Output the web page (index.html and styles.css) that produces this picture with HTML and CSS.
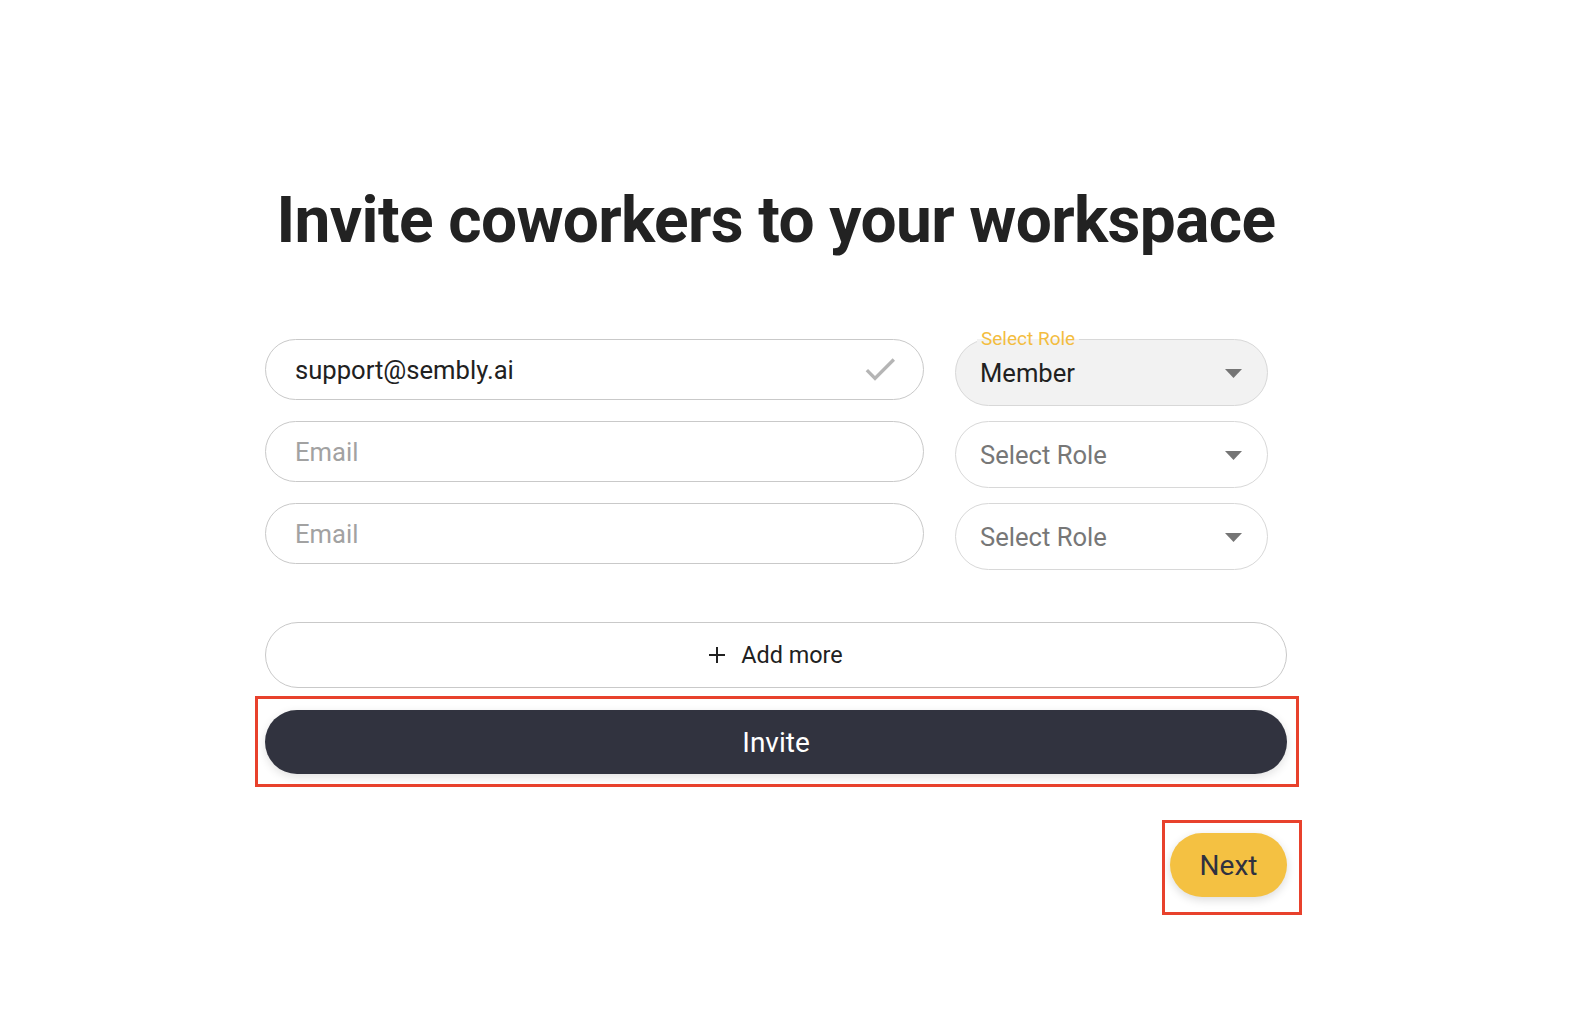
FILE: index.html
```html
<!DOCTYPE html>
<html lang="en">
<head>
<meta charset="utf-8">
<title>Invite coworkers</title>
<link rel="stylesheet" href="styles.css">
</head>
<body>
<main class="page">
  <h1 class="title">Invite coworkers to your workspace</h1>
  <section class="form">
    <div class="rows">
      <div class="row">
        <div class="field">
          <span class="value">support@sembly.ai</span>
          <svg class="check" width="40" height="40" viewBox="0 0 24 24"><path d="M9 16.17L4.83 12l-1.42 1.41L9 19 21 7l-1.41-1.41z"/></svg>
        </div>
        <div class="select filled">
          <span class="label">Select Role</span>
          <span class="value">Member</span>
          <svg class="arrow" width="17" height="9" viewBox="0 0 17 9"><path d="M0 0h17L8.5 9z"/></svg>
        </div>
      </div>
      <div class="row">
        <div class="field"><span class="placeholder">Email</span></div>
        <div class="select">
          <span class="value muted">Select Role</span>
          <svg class="arrow" width="17" height="9" viewBox="0 0 17 9"><path d="M0 0h17L8.5 9z"/></svg>
        </div>
      </div>
      <div class="row">
        <div class="field"><span class="placeholder">Email</span></div>
        <div class="select">
          <span class="value muted">Select Role</span>
          <svg class="arrow" width="17" height="9" viewBox="0 0 17 9"><path d="M0 0h17L8.5 9z"/></svg>
        </div>
      </div>
    </div>
    <button class="add-more" type="button">
      <svg class="plus" width="16" height="16" viewBox="0 0 16 16"><path d="M7 0h2v7h7v2H9v7H7V9H0V7h7z"/></svg>
      <span>Add more</span>
    </button>
    <button class="invite" type="button">Invite</button>
    <button class="next" type="button">Next</button>
  </section>
</main>
</body>
</html>
```
FILE: styles.css
```css
* { box-sizing: border-box; }

html, body { min-height: 100%; }

body {
  margin: 0;
  background: #ffffff;
  font-family: Roboto, "Liberation Sans", sans-serif;
  color: #212121;
}

.page {
  display: flex;
  flex-direction: column;
  align-items: center;
  min-height: 1030px;
  padding: 182px 44px 60px 0;
}

.title {
  margin: 0;
  font-size: 64px;
  font-weight: 700;
  line-height: 77px;
  color: #222222;
  letter-spacing: -0.62px;
}

.form {
  width: 1022px;
  margin-top: 80px;
  display: flex;
  flex-direction: column;
}

.rows {
  display: flex;
  flex-direction: column;
  gap: 15px;
}

.row {
  display: flex;
  align-items: flex-start;
  gap: 31px;
}

.field {
  width: 659px;
  height: 61px;
  border: 1px solid #c9c9c9;
  border-radius: 31px;
  display: flex;
  align-items: center;
  justify-content: space-between;
  padding: 0 23px 0 29px;
  font-size: 25.6px;
}

.field .value { color: #212121; }
.placeholder { color: #a2a2a2; }

.check { fill: #b5b5b5; margin-bottom: 2px; }

.select {
  position: relative;
  width: 313px;
  height: 67px;
  border: 1px solid #d8d8d8;
  border-radius: 34px;
  display: flex;
  align-items: center;
  justify-content: space-between;
  padding: 0 25px 0 24px;
  font-size: 25.6px;
}

.select.filled { background: #f2f2f2; }

.select .value { color: #212121; }
.select .value.muted { color: #777777; }

.arrow { fill: #757575; margin-top: 2px; }

.label {
  position: absolute;
  left: 21px;
  top: -13px;
  padding: 0 4px;
  font-size: 19px;
  line-height: 23px;
  color: #f3bd3f;
  background: linear-gradient(#ffffff 0 12px, #f2f2f2 12px 100%);
}

.add-more {
  margin-top: 52px;
  height: 66px;
  border: 1px solid #c9c9c9;
  border-radius: 33px;
  background: #ffffff;
  display: flex;
  align-items: center;
  justify-content: center;
  gap: 16px;
  font-family: inherit;
  font-size: 23.4px;
  color: #212121;
  padding: 0;
}

.plus { fill: #212121; }

.invite {
  position: relative;
  margin-top: 22px;
  height: 64px;
  border: 0;
  border-radius: 32px;
  background: #31333f;
  color: #ffffff;
  font-family: inherit;
  font-size: 28px;
  box-shadow: 0 3px 10px rgba(0, 0, 0, 0.12);
}

.invite::after {
  content: "";
  position: absolute;
  left: -10px;
  right: -12px;
  top: -14px;
  bottom: -13px;
  border: 3px solid #e8412c;
}

.next {
  position: relative;
  align-self: flex-end;
  margin-top: 59px;
  width: 117px;
  height: 64px;
  border: 0;
  border-radius: 32px;
  background: #f4c142;
  color: #2f3140;
  font-family: inherit;
  font-size: 28px;
  box-shadow: 0 3px 10px rgba(0, 0, 0, 0.14);
}

.next::after {
  content: "";
  position: absolute;
  left: -8px;
  right: -15px;
  top: -13px;
  bottom: -18px;
  border: 3px solid #e8412c;
}
```
